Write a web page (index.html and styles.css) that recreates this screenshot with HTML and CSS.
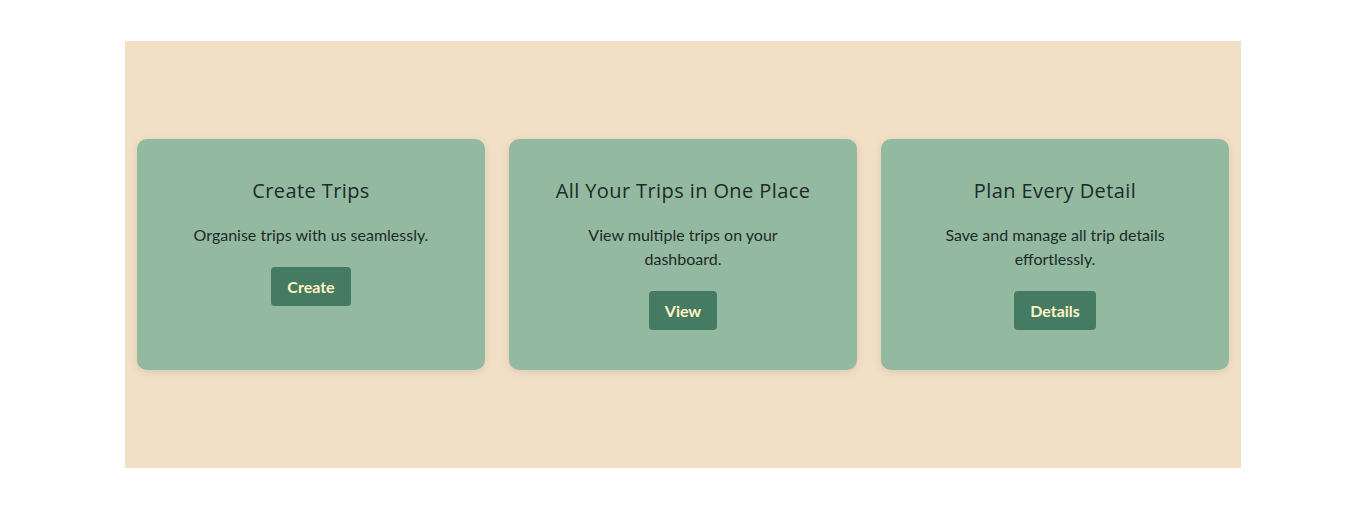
FILE: index.html
```html
<!DOCTYPE html>
<html lang="en">
<head>
<meta charset="utf-8">
<title>Trips</title>
<link rel="stylesheet" href="styles.css">
</head>
<body>
<section class="features">
  <div class="card">
    <h3 class="card-title">Create Trips</h3>
    <p class="card-text">Organise trips with us seamlessly.</p>
    <button class="btn">Create</button>
  </div>
  <div class="card">
    <h3 class="card-title">All Your Trips in One Place</h3>
    <p class="card-text">View multiple trips on your dashboard.</p>
    <button class="btn">View</button>
  </div>
  <div class="card">
    <h3 class="card-title">Plan Every Detail</h3>
    <p class="card-text">Save and manage all trip details effortlessly.</p>
    <button class="btn">Details</button>
  </div>
</section>
</body>
</html>
```
FILE: styles.css
```css
html, body {
  margin: 0;
  padding: 0;
  background: #ffffff;
}
body {
  padding-top: 41px;
  font-family: Lato, "Liberation Sans", sans-serif;
  color: #1e2a28;
}
.features {
  width: 1116px;
  height: 427px;
  box-sizing: border-box;
  margin: 0 auto;
  padding: 0 12px;
  background: #f2e0c6;
  display: flex;
  align-items: center;
  gap: 24px;
}
.card {
  flex: 1;
  box-sizing: border-box;
  height: 231px;
  padding: 37px 20px 40px;
  background: #93baa0;
  border-radius: 10px;
  box-shadow: 0 2px 8px rgba(0, 0, 0, 0.1);
  text-align: center;
  display: flex;
  flex-direction: column;
  align-items: center;
}
.card-title {
  margin: 0 0 17px;
  font-family: "Open Sans", sans-serif;
  font-weight: 400;
  font-size: 20px;
  line-height: 30px;
  letter-spacing: 0.4px;
  color: #1e2a28;
}
.card-text {
  margin: 0 0 20px;
  max-width: 250px;
  font-size: 16px;
  line-height: 24px;
}
.btn {
  font-family: Lato, "Liberation Sans", sans-serif;
  font-weight: 700;
  font-size: 16px;
  line-height: 19px;
  padding: 10px 16px;
  border: none;
  border-radius: 4px;
  background: #457a63;
  color: #fff4c4;
}
```
